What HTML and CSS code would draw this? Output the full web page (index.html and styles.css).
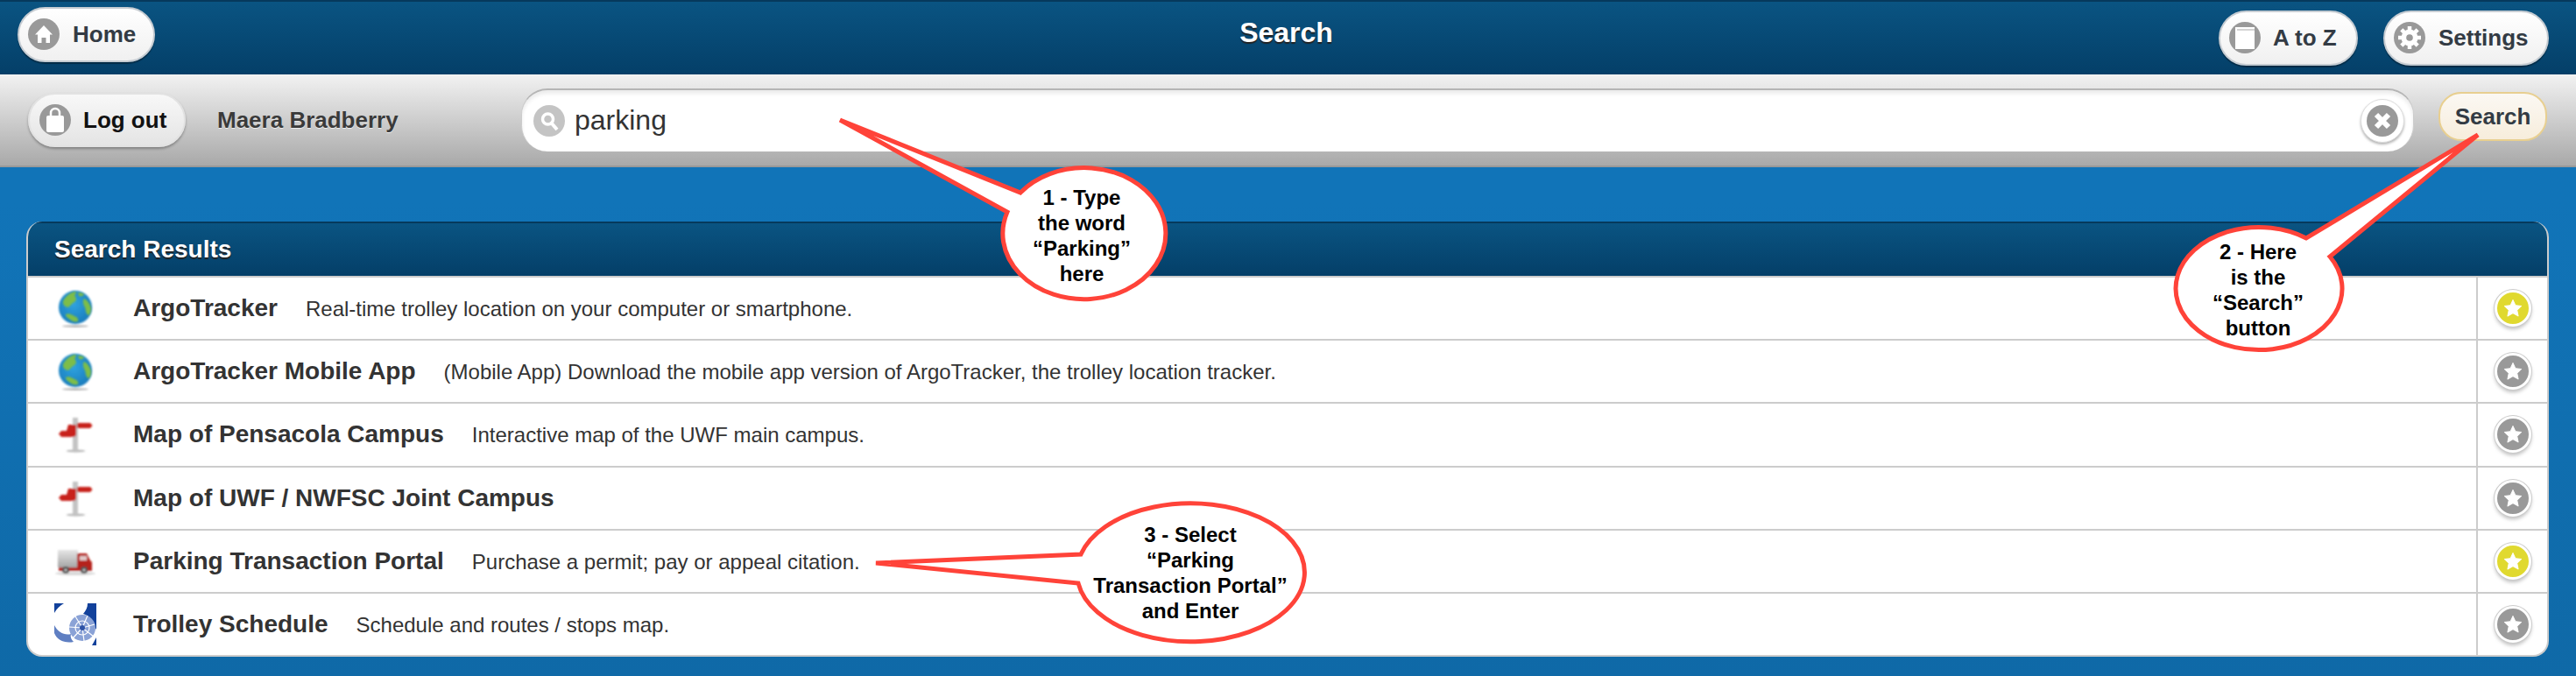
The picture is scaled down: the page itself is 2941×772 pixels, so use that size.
FILE: index.html
```html
<!DOCTYPE html>
<html lang="en">
<head>
  <meta charset="UTF-8" />
  <title>Search</title>
  <link rel="stylesheet" href="styles.css">
</head>
<body>

  <svg class="defs" width="0" height="0" aria-hidden="true">
    <defs>
      <radialGradient id="sea" cx="45%" cy="40%" r="60%">
        <stop offset="0" stop-color="#2fa3e0" />
        <stop offset="1" stop-color="#1a7dbd" />
      </radialGradient>
      <linearGradient id="boxFill" x1="0" y1="0" x2="0" y2="1">
        <stop offset="0" stop-color="#e6e6e6" />
        <stop offset="1" stop-color="#a6a6a6" />
      </linearGradient>
      <filter id="soft"><feGaussianBlur stdDeviation="0.8" /></filter>
      <filter id="softer"><feGaussianBlur stdDeviation="0.4" /></filter>
      <symbol id="globe" viewBox="0 0 48 50">
        <ellipse cx="24" cy="45.500" rx="15" ry="1.500" fill="#bbb" filter="url(#soft)" />
        <circle cx="24" cy="24" r="19" fill="url(#sea)" filter="url(#soft)" />
        <g fill="#7dbd48" filter="url(#soft)">
          <path d="M10 17c3-6 8-10 14-11 2 1 1 3-1 4 2 3 3 6 0 8-3 1-4 4-7 6-3 0-7-3-6-7z" />
          <path d="M27 7c3 0 6 1 7 2 0 2-4 3-6 2z" />
          <path d="M34 14c3 1 7 6 8 11 0 4-1 7-3 8-3-1-3-6-4-9-2-3-3-8-1-10z" />
          <path d="M13 32c3-2 7 0 10 2 3 1 5 3 4 6-3 1-7 0-9-2-2-2-5-3-5-6z" />
        </g>
      </symbol>
      <symbol id="signpost" viewBox="0 0 48 50">
        <g filter="url(#soft)">
          <ellipse cx="24.500" cy="44" rx="11" ry="1.500" fill="#b5b5b5" />
          <rect x="21" y="6" width="6" height="38" fill="#c4c4c4" />
          <path d="M26 12H41l2.500 3L41 18H26z" fill="#c8201c" />
          <path d="M16 14h9V25c0 2-2 3-4 3H8l-3-3.500L8 21h6z" fill="#c8201c" />
        </g>
      </symbol>
      <symbol id="truck" viewBox="0 0 48 50">
        <g filter="url(#soft)">
          <ellipse cx="24" cy="39" rx="23" ry="2" fill="#d8d8d8" />
          <rect x="4" y="12" width="23" height="20" fill="url(#boxFill)" />
          <path d="M26 16H37l4 8 2 2v10H5v-4H26z" fill="#b5211c" />
          <rect x="29" y="19" width="8" height="5" fill="#e0c8c8" />
          <circle cx="13" cy="35" r="4" fill="#4d4d4d" />
          <circle cx="13" cy="35" r="1.600" fill="#ccc" />
          <circle cx="34" cy="35" r="4" fill="#4d4d4d" />
          <circle cx="34" cy="35" r="1.600" fill="#ccc" />
        </g>
      </symbol>
      <symbol id="nautilus" viewBox="0 0 48 48">
        <rect width="48" height="48" fill="#fff" />
        <path d="M0 0H11C6 3 3 6 0 11z" fill="#12419b" />
        <path d="M38 0H48V30L44 23C42 18 39 14 33 12 36 8 38 5 38 0z" fill="#12419b" />
        <path d="M43 48 48 39V48z" fill="#12419b" />
        <path d="M0 25C4 33 12 37 19 35 18 38 19 41 22 44 12 46 3 42 0 34z" fill="#5f7fc2" />
        <g filter="url(#softer)">
          <circle cx="32" cy="28" r="15" fill="#8aa2d6" />
          <g fill="none" stroke="#fff" stroke-width="1.200">
            <path d="M32 28 24 15M32 28 38 14M32 28 46 24M32 28 45 38M32 28 34 43M32 28 21 40M32 28 17 27" />
            <circle cx="32" cy="28" r="8" />
          </g>
          <circle cx="32" cy="28" r="3" fill="#2d52a6" />
        </g>
      </symbol>
      <symbol id="star" viewBox="0 0 24 24">
        <path d="M12 1.500l3.200 6.900 7.500.9-5.500 5.200 1.500 7.400L12 18.200 5.300 22l1.500-7.500L1.300 9.300l7.500-.9z" fill="#fff" stroke="#fff" stroke-linejoin="round" />
      </symbol>
    </defs>
  </svg>

  <header class="topbar">
    <div class="topbar-left">
      <a class="pill pill-home">
        <span class="ico">
          <svg viewBox="0 0 36 36"><path d="M18 8 28 18.500H25V28H20.500V22H15.500V28H11V18.500H8z" fill="#fff" /></svg>
        </span>
        Home
      </a>
    </div>
    <h1 class="page-title">Search</h1>
    <div class="topbar-right">
      <a class="pill pill-az">
        <span class="ico">
          <svg viewBox="0 0 36 36"><rect x="7" y="6" width="22" height="25" fill="#fff" /><rect x="9" y="8" width="20" height="2" fill="#d4d4d4" /></svg>
        </span>
        A to Z
      </a>
      <a class="pill pill-settings">
        <span class="ico">
          <svg viewBox="0 0 36 36">
            <circle cx="18" cy="18" r="9.500" fill="#fff" />
            <path d="M18 5v6M18 25v6M5 18h6M25 18h6M8.800 8.800l4.200 4.200M23 23l4.200 4.200M27.200 8.800 23 13M13 23l-4.200 4.200" stroke="#fff" stroke-width="4.500" />
            <circle cx="18" cy="18" r="3.800" fill="#999" />
          </svg>
        </span>
        Settings
      </a>
    </div>
  </header>

  <div class="searchbar">
    <a class="pill pill-logout">
      <span class="ico">
        <svg viewBox="0 0 36 36"><rect x="8" y="13" width="20" height="19" rx="2" fill="#fff" /><path d="M13 14V10a5 5 0 0 1 10 0v4" fill="none" stroke="#fff" stroke-width="2.500" /></svg>
      </span>
      Log out
    </a>
    <span class="username">Maera Bradberry</span>
    <div class="search-box">
      <span class="ico ico-light">
        <svg viewBox="0 0 36 36"><circle cx="16.500" cy="16" r="6" fill="none" stroke="#fff" stroke-width="3.500" /><path d="M21 21l6 7" stroke="#fff" stroke-width="4" /></svg>
      </span>
      <span class="search-text">parking</span>
      <span class="clear-btn">
        <svg viewBox="0 0 36 36"><circle cx="18" cy="18" r="18" fill="#999" /><path d="M11 11l14 14M25 11 11 25" stroke="#fff" stroke-width="6" /></svg>
      </span>
    </div>
    <a class="search-btn">Search</a>
  </div>

  <main class="content">
    <section class="results">
      <h2 class="results-head">Search Results</h2>

      <div class="row">
        <div class="row-main">
          <svg class="row-icon"><use href="#globe" /></svg>
          <span class="row-title">ArgoTracker</span>
          <span class="row-desc">Real-time trolley location on your computer or smartphone.</span>
        </div>
        <div class="row-fav"><span class="fav fav-on"><svg><use href="#star" /></svg></span></div>
      </div>

      <div class="row">
        <div class="row-main">
          <svg class="row-icon"><use href="#globe" /></svg>
          <span class="row-title">ArgoTracker Mobile App</span>
          <span class="row-desc">(Mobile App) Download the mobile app version of ArgoTracker, the trolley location tracker.</span>
        </div>
        <div class="row-fav"><span class="fav"><svg><use href="#star" /></svg></span></div>
      </div>

      <div class="row">
        <div class="row-main">
          <svg class="row-icon"><use href="#signpost" /></svg>
          <span class="row-title">Map of Pensacola Campus</span>
          <span class="row-desc">Interactive map of the UWF main campus.</span>
        </div>
        <div class="row-fav"><span class="fav"><svg><use href="#star" /></svg></span></div>
      </div>

      <div class="row">
        <div class="row-main">
          <svg class="row-icon"><use href="#signpost" /></svg>
          <span class="row-title">Map of UWF / NWFSC Joint Campus</span>
        </div>
        <div class="row-fav"><span class="fav"><svg><use href="#star" /></svg></span></div>
      </div>

      <div class="row">
        <div class="row-main">
          <svg class="row-icon"><use href="#truck" /></svg>
          <span class="row-title">Parking Transaction Portal</span>
          <span class="row-desc">Purchase a permit; pay or appeal citation.</span>
        </div>
        <div class="row-fav"><span class="fav fav-on"><svg><use href="#star" /></svg></span></div>
      </div>

      <div class="row row-last">
        <div class="row-main">
          <svg class="row-icon row-icon-logo"><use href="#nautilus" /></svg>
          <span class="row-title">Trolley Schedule</span>
          <span class="row-desc">Schedule and routes / stops map.</span>
        </div>
        <div class="row-fav"><span class="fav"><svg><use href="#star" /></svg></span></div>
      </div>
    </section>
  </main>

  <!-- red help callouts pasted over the screenshot -->
  <svg class="callouts" width="2941" height="772" viewBox="0 0 2941 772">
    <g class="bubble">
      <path d="M959 137 1165 220A93 75 0 1 1 1150 242z" />
      <text x="1235" y="234">1 - Type</text>
      <text x="1235" y="263">the word</text>
      <text x="1235" y="292">“Parking”</text>
      <text x="1235" y="321">here</text>
    </g>
    <g class="bubble">
      <path d="M2829 154 2660 293A95 70 0 1 1 2633 272z" />
      <text x="2578" y="296">2 - Here</text>
      <text x="2578" y="325">is the</text>
      <text x="2578" y="354">“Search”</text>
      <text x="2578" y="383">button</text>
    </g>
    <g class="bubble">
      <path d="M1000 643 1234 633A130 79 0 1 1 1231 666z" />
      <text x="1359" y="619">3 - Select</text>
      <text x="1359" y="648">“Parking</text>
      <text x="1359" y="677">Transaction Portal”</text>
      <text x="1359" y="706">and Enter</text>
    </g>
  </svg>

</body>
</html>
```

FILE: styles.css
```css
* { box-sizing: border-box; }

html, body { margin: 0; padding: 0; }

body {
  width: 2941px; height: 772px; overflow: hidden; position: relative;
  font-family: "Liberation Sans", Arial, sans-serif;
  background: linear-gradient(#1174b8 30%, #0f69a7);
  color: #333;
}

.defs { position: absolute; }

/* top bar */
.topbar {
  height: 85px;
  display: grid; grid-template-columns: 1fr auto 1fr; align-items: center;
  padding: 0 24px 0 20px;
  background: linear-gradient(#0a5482, #043f68);
  border-top: 2px solid #06395c;
}
.topbar-left { display: flex; margin-top: -9px; }
.topbar-right { display: flex; justify-content: flex-end; gap: 29px; margin-top: -1px; padding-right: 7px; }
.page-title {
  margin: -12px 0 0; font-size: 32px; font-weight: 700; color: #fff;
  text-shadow: 0 2px 1px #222;
}

.pill {
  display: flex; align-items: center; height: 63px;
  border-radius: 32px; border: 2px solid #c6ccd2;
  background: linear-gradient(#fff, #f0f0f0);
  box-shadow: 0 2px 1px rgba(0,0,0,0.35);
  font-size: 26px; font-weight: 700; color: #333b44;
}
.pill-home { width: 157px; padding-left: 10px; gap: 15px; }
.pill-az { width: 159px; padding-left: 10px; gap: 14px; }
.pill-settings { width: 189px; padding-left: 10px; gap: 15px; }
.pill-logout {
  width: 180px; height: 62px; padding-left: 11px; gap: 14px; color: #111;
  background: linear-gradient(#f8f8f8, #e4e4e4);
  border-color: #e2e2e2; box-shadow: 0 2px 3px rgba(0,0,0,0.3);
}

.ico {
  flex: none; width: 36px; height: 36px; border-radius: 50%;
  background: #999; display: block;
}
.ico svg { display: block; width: 36px; height: 36px; }
.ico-light { background: #c4c4c4; }

/* search bar */
.searchbar {
  height: 106px;
  display: flex; align-items: center;
  padding: 0 33px 0 32px;
  background: linear-gradient(#f2f2f2, #a9a9a9);
  border-bottom: 2px solid #999;
}
.username {
  width: 347px; padding-left: 36px;
  font-size: 26px; font-weight: 700; color: #3a3a3a;
  text-shadow: 0 1px 0 #eee;
}
.search-box {
  width: 2161px; height: 72px; margin-left: 36px;
  display: flex; align-items: center;
  padding: 0 10px 0 13px;
  background: #fff; border-radius: 30px;
  border-top: 2px solid #b5b5b5; border-left: 1px solid #ccc; border-right: 1px solid #ccc;
  box-shadow: inset 0 4px 4px rgba(0,0,0,0.08);
}
.search-text { margin-left: 11px; margin-top: -2px; font-size: 32px; color: #333; }
.clear-btn {
  margin-left: auto; width: 50px; height: 50px; padding: 6px;
  border-radius: 50%; background: #fff;
  border: 1px solid #ddd; box-shadow: 0 2px 3px rgba(0,0,0,0.3);
}
.clear-btn svg { display: block; width: 36px; height: 36px; }
.search-btn {
  width: 124px; height: 56px; margin-left: 28px; margin-top: -8px;
  display: flex; align-items: center; justify-content: center;
  border-radius: 26px; border: 2px solid #e8cf90;
  background: linear-gradient(#fbf8f3, #f7eddc);
  font-size: 26px; font-weight: 700; color: #333b44;
}

/* results panel */
.content { padding: 62px 31px 0 30px; }
.results {
  height: 497px; display: flex; flex-direction: column;
  border-radius: 18px; overflow: hidden;
  background: #fff;
  border: 2px solid #ccc; border-top: 0;
}
.results-head {
  height: 64px; margin: 0 -2px; padding: 0 0 0 32px; flex: none;
  display: flex; align-items: center;
  background: linear-gradient(#0a5482, #043f68);
  border-top: 2px solid #06395c;
  border-bottom: 2px solid #ccc;
  font-size: 28px; font-weight: 700; color: #fff;
  text-shadow: 0 2px 1px #222;
}
.row {
  flex: 1; display: flex; min-height: 0;
  border-bottom: 2px solid #ccc;
}
.row-last { border-bottom: 0; }
.row-main {
  flex: 1; display: flex; align-items: center;
  padding-left: 30px;
}
.row-icon { flex: none; width: 48px; height: 50px; margin-right: 42px; }
.row-icon-logo { height: 48px; }
.row-title { font-size: 28px; font-weight: 700; color: #333; margin-right: 32px; }
.row-desc { font-size: 24px; color: #333; margin-top: 2px; }
.row-fav {
  flex: none; width: 81px;
  display: flex; align-items: center; justify-content: center;
  border-left: 2px solid #ccc;
}
.fav {
  display: block; width: 42px; height: 42px; padding: 7px;
  border-radius: 50%; background: #999;
  border: 3px solid #fff;
  box-shadow: 0 0 0 1px #ccc, 0 3px 4px rgba(0,0,0,0.25);
}
.fav svg { display: block; width: 22px; height: 22px; }
.fav-on { background: #e0d92f; }

/* help callouts */
.callouts { position: absolute; left: 0; top: 0; }
.bubble path { fill: #fff; stroke: #ff4339; stroke-width: 5; stroke-linejoin: miter; stroke-miterlimit: 4; }
.bubble text {
  font-family: "Liberation Sans", Arial, sans-serif;
  font-size: 24px; font-weight: 700; fill: #000; text-anchor: middle;
}
```
